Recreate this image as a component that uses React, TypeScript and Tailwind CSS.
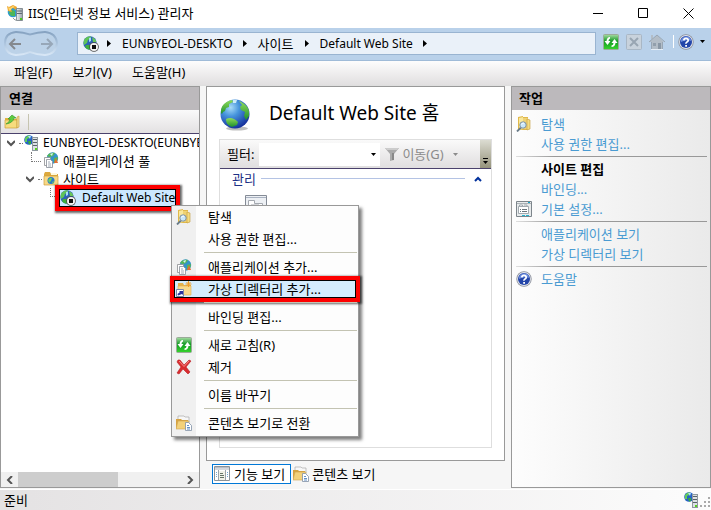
import React, { useState } from 'react';

type IconProps = { className?: string };

function Globe({ className = 'size-4' }: IconProps) {
  return (
    <svg viewBox="0 0 32 32" className={className}>
      <defs>
        <radialGradient id="sea" cx="35%" cy="28%" r="75%">
          <stop offset="0" stopColor="#a9dcf7" />
          <stop offset="0.4" stopColor="#4694dc" />
          <stop offset="1" stopColor="#16309c" />
        </radialGradient>
        <linearGradient id="land" x2="0" y2="1">
          <stop offset="0" stopColor="#8fdc5c" />
          <stop offset="1" stopColor="#1e8f2c" />
        </linearGradient>
      </defs>
      <ellipse cx="18" cy="29.5" rx="11" ry="2" fill="#000" opacity="0.25" />
      <circle cx="16" cy="15" r="14.5" fill="url(#sea)" />
      <path d="M2 11C3 5 8 2 13 1l1 2-4 2 0 3-3 1-1 3-2 1-1 2-1-1z" fill="url(#land)" />
      <path d="M7 20c4-2 8-1 12 3l-1 3-5 2c-3-1-6-3-6-8z" fill="url(#land)" />
      <path d="M20 2c5 2 9 5 10 10l0 5-3 4-2-4 1-4-4-2-1-3 2-2z" fill="url(#land)" />
      <path d="M14 1l4 0-1 3-3 0z" fill="#eaffff" opacity="0.8" />
    </svg>
  );
}

function SiteIcon() {
  return (
    <svg viewBox="0 0 16 16" className="size-4 shrink-0">
      <circle cx="7" cy="7" r="6.7" fill="#2c62b8" />
      <path d="M2 2.5Q5 0 8 .4L7 3 5 4 4 7 1 9Q-.2 5 2 2.5z" fill="#5fc458" />
      <path d="M3 9l4 0 1 4-2 .8Q3 13 2 11z" fill="#3eae3e" />
      <path d="M9 1l3 2 1.5 3L10 6z" fill="#69c758" />
      <path d="M6 2l2-.5L8 5 6 6z" fill="#a6def6" />
      <circle cx="11" cy="11" r="4.8" fill="#4a4a4a" />
      <circle cx="11" cy="11" r="4" fill="#f2f2f2" />
      <path d="M9 9h4v4H9z" fill="#111" />
    </svg>
  );
}

function ServerIcon({ className = 'size-4 shrink-0' }: IconProps) {
  return (
    <svg viewBox="0 0 16 16" className={className}>
      <circle cx="5" cy="5" r="4.8" fill="#2763c4" />
      <path d="M1 3Q3 0 6 .3L5 3 3 4 3 7 1 7z" fill="#63cc5a" />
      <path d="M4 6l3 0 0 3-2 .6z" fill="#36ad3a" />
      <path d="M4 1l3 0-1 3z" fill="#b2e6fa" />
      <path d="M8 2h6v14H8z" fill="#8f999f" />
      <path d="M9 3h4v12H9z" fill="#dce1e4" />
      <path d="M9 4h4v1H9zM9 7h4v1H9zM9 10h4v1H9z" fill="#596269" />
      <path d="M11 13h2v2h-2z" fill="#55d21c" />
    </svg>
  );
}

function AppIcon() {
  return (
    <svg viewBox="0 0 16 16" className="size-4 shrink-0">
      <defs>
        <linearGradient id="tower" x2="1">
          <stop offset="0" stopColor="#eef2f4" />
          <stop offset="1" stopColor="#98a2a9" />
        </linearGradient>
      </defs>
      <circle cx="6" cy="7" r="5.3" fill="#2f9bd0" />
      <path d="M2 7l3-2 3 1v5l-3 0-2-1z" fill="#4db657" />
      <path d="M0 1l2 1 4-2 4 2-1 3-3-2-2 1 1 3-4-1z" fill="#eda62c" />
      <path d="M1 2l2 1 3-2 2 1-3 1-2 3-1-1z" fill="#ffd873" />
      <path d="M9.5 3.5h6v12h-6z" fill="url(#tower)" stroke="#717b82" strokeWidth="0.8" />
      <path d="M10 6h5M10 8.5h5" stroke="#606a72" />
      <path d="M13 13h2v2h-2z" fill="#47c91c" />
      <path d="M6 13l2 2h2" stroke="#8b959b" fill="none" />
    </svg>
  );
}

function BrowseIcon() {
  return (
    <svg viewBox="0 0 16 16" className="size-4 shrink-0">
      <path d="M2 1l5-1v1h5v13H2z" fill="#e0b84a" />
      <path d="M3 2l4-1v12l-4 1z" fill="#f9e89c" />
      <path d="M7 2h5v11H7z" fill="#efd273" />
      <path d="M11 3l3 1v9l-3 1z" fill="#f5dc80" stroke="#c49b39" strokeWidth="0.6" />
      <path d="M5 11.5L1 15.5" stroke="#697b89" strokeWidth="1.8" />
      <circle cx="7" cy="9" r="3.2" fill="#c9e7fa" stroke="#7f909c" />
      <path d="M5.5 8.5Q6 7 8 7" fill="none" stroke="#fff" />
    </svg>
  );
}

function AppPoolIcon() {
  return (
    <svg viewBox="0 0 16 16" className="size-4 shrink-0">
      <circle cx="9.5" cy="6" r="5.7" fill="#3594c8" />
      <path d="M4 4Q7 0 12 1l-2 3-3 1zM11 6l4-1-1 5-3 1z" fill="#58b852" />
      <path d="M7 2l3-1-1 3z" fill="#d4f2fb" />
      <path d="M13 6l2 5-4 0z" fill="#e16d38" />
      <path d="M1.5 5.5h6v8h-6z" fill="#fff" stroke="#8b8d91" strokeWidth="0.8" />
      <path d="M3.5 7.5h4l2 2v6h-6z" fill="#fff" stroke="#858c96" strokeWidth="0.8" />
      <path d="M5 10h2M5 12h3M5 14h3" stroke="#788799" strokeWidth="0.7" />
    </svg>
  );
}

function SitesFolderIcon() {
  return (
    <svg viewBox="0 0 16 16" className="size-4 shrink-0">
      <path d="M1 3l1-2h5l1 2h7v11H1z" fill="#dca93e" />
      <path d="M1 5h14v9H1z" fill="#f7d987" stroke="#cf9f3b" strokeWidth="0.7" />
      <path d="M8 2h6v2H8z" fill="#fff8dc" />
      <circle cx="8" cy="9.5" r="3.5" fill="#297bc7" />
      <path d="M5 9l2-2h2l-1 3-2 2zM9 11l2-1-1 3z" fill="#6fcf5e" />
    </svg>
  );
}

function UpFolderIcon() {
  return (
    <svg viewBox="0 0 16 16" className="size-4 shrink-0">
      <path d="M1 4h5l1 1h5l2-2v11H1z" fill="#e4b53f" />
      <path d="M1 6h12v8H1z" fill="#f7dc7e" stroke="#cba03b" strokeWidth="0.7" />
      <path d="M13 3l2-1v11l-2 1z" fill="#f4dc94" stroke="#c89d3e" strokeWidth="0.6" />
      <path d="M2 10Q6 8 6 5H4l4-4 4 3h-2Q9 9 2 10z" fill="#5ecb3f" stroke="#2a942b" strokeWidth="0.6" />
    </svg>
  );
}

function VirtualDirIcon() {
  return (
    <svg viewBox="0 0 16 16" className="size-4 shrink-0">
      <path d="M2 2h5l1 2h7v10H2z" fill="#e5b14c" />
      <path d="M2 5h13v9H2z" fill="#f8d98c" stroke="#dfae51" strokeWidth="0.6" />
      <path d="M12.5 0v6M9.5 3h6M10.5 1l4 4M14.5 1l-4 4" stroke="#ef9d28" />
      <path d="M.5 8.5h7v7h-7z" fill="#fff" stroke="#7985aa" />
      <path d="M2 14.5L1.5 13 4 11 3 10h4v4l-1-1z" fill="#2b319d" />
    </svg>
  );
}

function RefreshIcon() {
  return (
    <svg viewBox="0 0 16 16" className="size-4 shrink-0">
      <defs>
        <linearGradient id="refresh" x2="0" y2="1">
          <stop offset="0" stopColor="#a8dca6" />
          <stop offset="0.45" stopColor="#149b23" />
          <stop offset="1" stopColor="#36d52d" />
        </linearGradient>
      </defs>
      <rect x="0.5" y="0.5" width="15" height="15" rx="1" fill="url(#refresh)" stroke="#9aab99" />
      <path d="M7 3Q4 3 3.5 7H1.5l3 4 3-4H5.5Q5.5 5 7 4.5z" fill="#fff" />
      <path d="M8.5 13Q12 13 12.5 9h2l-3-4-3 4h2q0 2-2 2.5z" fill="#fff" />
    </svg>
  );
}

function DeleteIcon() {
  return (
    <svg viewBox="0 0 16 16" className="size-4 shrink-0">
      <path d="M2 1l2 0 4 5 5-5 2 1-5 6 4 5-2 2-5-5-4 5-2-1 4-6-4-5z" fill="#d92c2f" stroke="#b91d24" strokeWidth="0.6" />
      <path d="M3 2l5 5.5L13 2" stroke="#f68a86" fill="none" />
    </svg>
  );
}

function ContentIcon() {
  return (
    <svg viewBox="0 0 16 16" className="size-4 shrink-0">
      <path d="M2 1h6l1 1h4v6H2z" fill="#f7f7f7" stroke="#aaa" strokeWidth="0.7" />
      <path d="M0 4h5l1 1h6v9H0z" fill="#d6a340" />
      <path d="M2 6h11l-2 8H0z" fill="#f3d17a" stroke="#d0a550" strokeWidth="0.6" />
      <path d="M9.5 7.5h3l3 3v5h-6z" fill="#fff" stroke="#7f8fa5" strokeWidth="0.8" />
      <path d="M11 10.5h2M11 12.5h3M11 14h3" stroke="#3c75b8" strokeWidth="0.8" />
    </svg>
  );
}

function SettingsIcon() {
  return (
    <svg viewBox="0 0 16 16" className="size-4 shrink-0">
      <path d="M.5.5h15v15H.5z" fill="#e8ebec" stroke="#7d858b" />
      <path d="M1 2.5h14" stroke="#aab1b6" />
      <path d="M12 1h2v1h-2z" fill="#15a6ca" />
      <path d="M2.5 5.5h10v7h-10zM3.5 5V4h3v1M8 4h3v1" fill="#fff" stroke="#8d979e" strokeWidth="0.8" />
      <path d="M4 8.5h1M6 8.5h5M4 10.5h1M6 10.5h5" stroke="#69747c" />
      <path d="M6 14.5h3M10 14.5h3" stroke="#22b3cf" />
    </svg>
  );
}

function FeatureIcon() {
  return (
    <svg viewBox="0 0 16 16" className="size-4 shrink-0">
      <path d="M.5.5h15v14H.5z" fill="#fff" stroke="#8b9298" />
      <path d="M1 1h14v3H1z" fill="#b8bec8" />
      <path d="M1 3h14" stroke="#efefef" />
      <path d="M4.5 4v10M11.5 4v10" stroke="#9ba3a9" />
      <path d="M5 5h6v9H5z" fill="#f1f2e8" />
      <path d="M6 7.5h3M6 9.5h4M6 11.5h4" stroke="#657466" />
      <path d="M2 6.5h1M2 8.5h1M2 10.5h1M13 6.5h1M13 8.5h1M13 10.5h1" stroke="#6fa9d2" />
    </svg>
  );
}

function HelpIcon() {
  return (
    <svg viewBox="0 0 16 16" className="size-4 shrink-0">
      <circle cx="8" cy="8" r="7.7" fill="#8b8f99" />
      <circle cx="8" cy="8" r="6.9" fill="#e1e5ee" />
      <circle cx="8" cy="8" r="6" fill="#2345a9" />
      <path d="M3 6Q5 2 9 2.5T13 7Q8 5 3 8z" fill="#6c8ddd" />
      <path d="M5.8 6.3Q6 4.3 8 4.3t2.2 1.9Q10.2 7.3 9 8T8.1 9.7" stroke="#fff" strokeWidth="1.7" fill="none" />
      <path d="M7.2 11h1.8v1.7H7.2z" fill="#fff" />
    </svg>
  );
}

function Chevron({ d, className = 'size-2' }: { d: string; className?: string }) {
  return (
    <svg viewBox="0 0 8 8" className={`shrink-0 ${className}`}>
      <path d={d} fill="none" stroke="currentColor" strokeWidth="2" />
    </svg>
  );
}

function Caret({ className = '' }: IconProps) {
  return (
    <svg viewBox="0 0 5 3" className={`h-[3px] w-[5px] shrink-0 ${className}`}>
      <path d="M0 0h5L2.5 3z" fill="currentColor" />
    </svg>
  );
}

function CrumbArrow() {
  return (
    <svg viewBox="0 0 4 7" className="h-[7px] w-1 shrink-0">
      <path d="M0 0l4 3.5L0 7z" />
    </svg>
  );
}

const MENU_GROUPS = [
  [
    { label: '탐색', icon: <BrowseIcon /> },
    { label: '사용 권한 편집...', icon: null },
  ],
  [
    { label: '애플리케이션 추가...', icon: <AppPoolIcon /> },
    { label: '가상 디렉터리 추가...', icon: <VirtualDirIcon />, active: true },
  ],
  [{ label: '바인딩 편집...', icon: null }],
  [
    { label: '새로 고침(R)', icon: <RefreshIcon /> },
    { label: '제거', icon: <DeleteIcon /> },
  ],
  [{ label: '이름 바꾸기', icon: null }],
  [{ label: '콘텐츠 보기로 전환', icon: <ContentIcon /> }],
];

const ACTION_GROUPS = [
  [
    { label: '탐색', icon: <BrowseIcon /> },
    { label: '사용 권한 편집...', icon: null },
  ],
  [
    { label: '사이트 편집', heading: true, icon: null },
    { label: '바인딩...', icon: null },
    { label: '기본 설정...', icon: <SettingsIcon /> },
  ],
  [
    { label: '애플리케이션 보기', icon: null },
    { label: '가상 디렉터리 보기', icon: null },
  ],
  [{ label: '도움말', icon: <HelpIcon /> }],
];

function TitleBar() {
  return (
    <header className="flex h-7 items-center bg-white pb-[2px] pl-[7px]">
      <AppIcon />
      <h1 className="ml-[5px] flex-1">IIS(인터넷 정보 서비스) 관리자</h1>
      <button aria-label="최소화" className="flex w-[45px] justify-center">
        <svg viewBox="0 0 11 11" className="size-[11px]"><path d="M0 5.5h10" stroke="#000" /></svg>
      </button>
      <button aria-label="최대화" className="flex w-[45px] justify-center">
        <svg viewBox="0 0 11 11" className="size-[11px]"><path d="M.5.5h9v9h-9z" fill="none" stroke="#000" /></svg>
      </button>
      <button aria-label="닫기" className="flex w-[45px] justify-center">
        <svg viewBox="0 0 11 11" className="size-[11px]"><path d="M.5 .5l10 10M10.5 .5l-10 10" stroke="#000" /></svg>
      </button>
    </header>
  );
}

function AddressBar() {
  return (
    <nav className="flex h-[33px] items-center border-b border-[#9fbbd8] bg-[#b9d1ea] pr-[6px] pb-px">
      <div className="flex w-[77px] pl-[3px]">
        <svg viewBox="0 0 56 27" className="h-[27px] w-14">
          <defs>
            <linearGradient id="well" x2="0" y2="1">
              <stop offset="0" stopColor="#829fbe" />
              <stop offset="0.5" stopColor="#adc5de" />
              <stop offset="1" stopColor="#dceaf8" />
            </linearGradient>
          </defs>
          <path d="M13 1Q20 1 27 3.5 35 1 42 1 54 2 55 13 54 25 42 26 35 26 27 23 20 26 13 26 1 25 1 13 1 2 13 1z" fill="url(#well)" />
          <path d="M13 3Q20 3 27 5.5 35 3 42 3 52 4 53 13 52 23 42 24 35 24 27 21 20 24 13 24 3 23 3 13 3 4 13 3z" fill="#bcd2e8" />
          <path d="M18 14H7M12 9l-5 5 5 5" stroke="#85898e" strokeWidth="2" fill="none" />
          <path d="M38 14h11M44 9l5 5-5 5" stroke="#97a7b8" strokeWidth="2" fill="none" />
        </svg>
      </div>
      <div className="flex h-[23px] flex-1 items-center border border-[#99b4d1] bg-[#eaf1f9] pl-[5px] text-[12px] whitespace-nowrap">
        <SiteIcon />
        <span className="ml-2"><CrumbArrow /></span>
        <a href="#server" className="ml-[11px]">EUNBYEOL-DESKTO</a>
        <span className="ml-[10px]"><CrumbArrow /></span>
        <a href="#sites" className="ml-[11px] text-[13px]">사이트</a>
        <span className="ml-[11px]"><CrumbArrow /></span>
        <a href="#site" className="ml-[11px]">Default Web Site</a>
        <span className="ml-[10px]"><CrumbArrow /></span>
      </div>
      <div className="ml-[7px] flex items-center gap-[7px] pb-1">
        <button aria-label="새로 고침"><RefreshIcon /></button>
        <button aria-label="중지">
          <svg viewBox="0 0 16 16" className="size-4">
            <rect x="0.5" y="0.5" width="15" height="15" rx="1" fill="#c8d2dc" stroke="#a9b7c5" />
            <path d="M4 4l8 8M12 4l-8 8" stroke="#98a5b2" strokeWidth="2" />
          </svg>
        </button>
        <button aria-label="홈">
          <svg viewBox="0 0 16 16" className="size-4">
            <path d="M2 1h2v4H2zM8 1l7 7h-1v7H2V8H0z" fill="#b3bdc7" />
            <path d="M0 8l8-7 8 7M2.5 8v7M13.500 8v7" fill="none" stroke="#98a6b4" />
            <path d="M4 9h3v3H4z" fill="#929fac" />
            <path d="M9 9h3v6H9z" fill="#8997a5" />
            <path d="M2 15.500h12" stroke="#e4edf6" />
          </svg>
        </button>
      </div>
      <div className="ml-2 flex items-center gap-1 pb-1">
        <span className="h-[13px] w-px bg-white" />
        <button aria-label="도움말"><HelpIcon /></button>
        <Caret className="ml-[2px]" />
      </div>
    </nav>
  );
}

function Connections() {
  return (
    <section className="flex w-[200px] shrink-0 flex-col overflow-hidden border border-[#999] bg-white">
      <h2 className="h-[23px] bg-[#bcb9bc] pl-2 leading-[23px] font-bold">연결</h2>
      <div className="flex h-6 items-center border-b border-[#4a416c] bg-linear-to-b from-[#fafafa] to-[#e3e1e2] pl-[3px]">
        <button aria-label="위로"><UpFolderIcon /></button>
        <span className="ml-2 h-4 border-l border-[#c6c4b0]" />
      </div>
      <ul className="flex-1 whitespace-nowrap">
        <li className="flex h-[18px] items-center pl-[6px] text-[12px]">
          <Chevron d="M0 2l4 4 4-4" className="size-2 text-[#555]" />
          <span className="mr-px ml-1 w-1 shrink-0 border-t border-dotted border-[#777]" />
          <ServerIcon />
          <span className="ml-[3px]">EUNBYEOL-DESKTO(EUNBYE</span>
        </li>
        <li className="flex h-[18px] pl-[30px]">
          <span className="mr-[2px] mb-2 w-[10px] border-b border-l border-dotted border-[#777]" />
          <AppPoolIcon />
          <span className="ml-1 leading-[18px]">애플리케이션 풀</span>
        </li>
        <li className="flex h-[18px] items-center pl-[25px]">
          <Chevron d="M0 2l4 4 4-4" className="size-2 text-[#555]" />
          <span className="mr-px ml-1 w-1 border-t border-dotted border-[#777]" />
          <SitesFolderIcon />
          <span className="ml-1">사이트</span>
        </li>
        <li className="flex h-[20px] items-center pl-[49px] text-[12px]">
          <span className="h-[9px] w-[5px] self-start border-b border-l border-dotted border-[#777]" />
          <span className="-my-1 flex border-4 border-[#fd0000] shadow-[1px_1px_2px_1px_rgba(0,0,0,0.6)]">
            <span className="flex h-[18px] items-center border border-black bg-[#cce8ff]">
              <SiteIcon />
              <span className="pl-[6px]">Default Web Site</span>
            </span>
          </span>
        </li>
      </ul>
      <div className="flex h-[15px] items-center bg-[#f0f0f0] px-[5px] text-[#555]">
        <Chevron d="M6 0L2 4l4 4" />
        <span className="ml-1 h-full w-[100px] bg-[#cdcdcd]" />
        <span className="flex-1" />
        <Chevron d="M2 0l4 4-4 4" />
      </div>
    </section>
  );
}

function FeatureView() {
  const [filter, setFilter] = useState('');

  return (
    <section className="flex min-w-0 flex-1 flex-col">
      <div className="flex flex-1 flex-col border border-[#999] bg-white px-3 pb-3">
        <div className="flex h-[52px] items-center pt-1">
          <Globe className="h-8 w-8" />
          <h2 className="ml-[18px] pb-1 text-[19px]">Default Web Site 홈</h2>
        </div>
        <div className="flex flex-1 flex-col border border-[#dedede]">
          <div className="flex h-[29px] items-center border-b border-[#4a416c] bg-linear-to-b from-[#fafafa] to-[#e0dedf] pl-[7px]">
            <label htmlFor="filter">필터:</label>
            <div className="ml-[5px] flex h-[23px] w-[121px] items-center bg-white pr-1">
              <input id="filter" value={filter} onChange={(e) => setFilter(e.target.value)} className="min-w-0 flex-1 outline-none" />
              <Caret />
            </div>
            <button className="ml-1 flex items-center text-[#8b8b8b]">
              <svg viewBox="0 0 16 14" className="h-[14px] w-4">
                <path d="M1 1h14L10 7v6l-4 1V7z" fill="#aaa" />
                <path d="M1 1h14l-2 2H3z" fill="#ccc" />
                <path d="M8 6h2v7H8z" fill="#888" />
              </svg>
              <span className="ml-[2px]">이동(G)</span>
              <Caret className="ml-[9px]" />
            </button>
            <span className="flex-1" />
            <button aria-label="도구 모음 옵션" className="flex h-full w-[11px] flex-col items-center justify-end gap-[2px] bg-linear-to-b from-[#dcdcd2] to-[#96947c] pb-1">
              <span className="h-px w-[5px] bg-black" />
              <Caret />
            </button>
          </div>
          <div className="flex h-[19px] items-center pr-[9px] pl-3 text-[#1e3287]">
            <h3>관리</h3>
            <span className="mr-[9px] ml-[5px] h-px flex-1 bg-[#b4c3e4]" />
            <Chevron d="M1 6l3-3 3 3" className="size-2 text-[#00309c]" />
          </div>
          <svg viewBox="0 0 22 22" className="mt-[7px] ml-[25px] size-[22px]">
            <path d="M.5.5h21v21H.5z" fill="#edf0f4" stroke="#848b96" />
            <path d="M1 2.5h20" stroke="#aab3c2" />
            <path d="M3.5 5.5h6v3h8v10h-14z" fill="#fff" stroke="#a4a9b0" />
            <path d="M6 10h8v6H6z" fill="#fff" stroke="#a4a9b0" />
          </svg>
        </div>
      </div>
      <div className="flex h-[27px] items-center pb-[2px] pl-[6px]">
        <button className="flex h-5 items-center border border-[#0078d7] bg-white pr-[5px] pl-px">
          <FeatureIcon />
          <span className="ml-1">기능 보기</span>
        </button>
        <button className="ml-[2px] flex items-center">
          <ContentIcon />
          <span className="ml-[3px]">콘텐츠 보기</span>
        </button>
      </div>
    </section>
  );
}

function Actions() {
  return (
    <section className="w-[200px] shrink-0 border border-[#999] bg-linear-to-r from-[#fdfdfd] to-[#eaeaea]">
      <h2 className="h-[23px] bg-[#bcb9bc] pl-[7px] leading-[23px] font-bold">작업</h2>
      <div className="pt-1 pr-[3px] pl-1">
        {ACTION_GROUPS.map((group, i) => (
          <div key={i}>
            {i > 0 && <div className="my-[2px] h-px bg-linear-to-r from-[#e0e0e0] via-[#999] via-20% to-[#999]" />}
            {group.map((item) => (
              <div key={item.label} className="flex h-5 items-center">
                <span className="flex w-[25px]">{item.icon}</span>
                {item.heading ? (
                  <h3 className="font-bold">{item.label}</h3>
                ) : (
                  <a href="#action" className="text-[#4a9bd2]">{item.label}</a>
                )}
              </div>
            ))}
          </div>
        ))}
      </div>
    </section>
  );
}

function ContextMenu() {
  return (
    <div role="menu" className="absolute top-[205px] left-[171px] w-[188px] border border-[#999] bg-linear-to-r from-[#f0f0f0] from-[24px] to-[#fdfdfd] to-[24px] pb-[2px] shadow-[3px_3px_3px_rgba(0,0,0,0.5)]">
      {MENU_GROUPS.map((group, i) => (
        <div key={i}>
          {i > 0 && <div className="my-[2px] mr-px ml-8 h-[2px] border-t border-[#c3c3b2]" />}
          {group.map((item) =>
            item.active ? (
              <div key={item.label} className="-mx-[2px] -my-[2px] border-4 border-[#fd0000] shadow-[1px_1px_2px_1px_rgba(0,0,0,0.6)]">
                <button role="menuitem" className="flex h-[18px] w-full items-center border border-black bg-[#d4ecfd] pl-px">
                  {item.icon}
                  <span className="ml-4">{item.label}</span>
                </button>
              </div>
            ) : (
              <button key={item.label} role="menuitem" className="flex h-[22px] w-full items-center pl-1">
                <span className="flex w-8">{item.icon}</span>
                {item.label}
              </button>
            ),
          )}
        </div>
      ))}
    </div>
  );
}

export default function App() {
  return (
    <div className="relative flex min-h-screen flex-col bg-[#f6f6f6] font-['Noto_Sans','Noto_Sans_CJK_KR',sans-serif] text-[13px] leading-4 text-black">
      <TitleBar />
      <AddressBar />
      <div className="flex h-[25px] items-center gap-5 border-b border-[#dedede] bg-linear-to-b from-[#fdfdfd] to-[#e1dfe0] pb-[2px] pl-[14px]">
        <button>파일(F)</button>
        <button>보기(V)</button>
        <button>도움말(H)</button>
      </div>
      <main className="flex flex-1 gap-[6px] pb-px">
        <Connections />
        <FeatureView />
        <Actions />
      </main>
      <footer className="flex h-[21px] items-center border-t border-white bg-linear-to-r from-[#e4e2e3] to-[#fcfcfc] pr-px pb-px pl-1">
        <span className="flex-1">준비</span>
        <ServerIcon />
        <svg viewBox="0 0 10 10" className="mt-1 size-[10px]">
          <path d="M8 0h2v2H8zM4 4h2v2H4zM8 4h2v2H8zM0 8h2v2H0zM4 8h2v2H4zM8 8h2v2H8z" fill="#aaa" />
        </svg>
      </footer>
      <ContextMenu />
    </div>
  );
}
